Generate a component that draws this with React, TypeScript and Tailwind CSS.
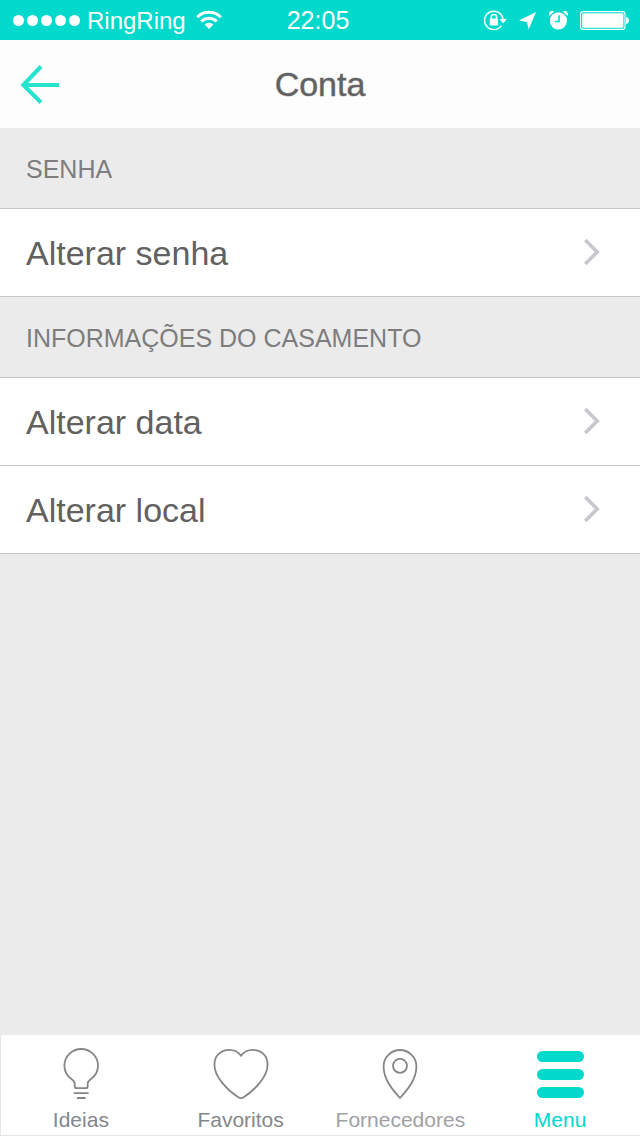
import type { ReactNode } from "react";

interface Section {
  title: string;
  items: string[];
}

interface Tab {
  label: string;
  icon: ReactNode;
  className: string;
  active?: boolean;
}

const sections: Section[] = [
  { title: "Senha", items: ["Alterar senha"] },
  { title: "Informações do casamento", items: ["Alterar data", "Alterar local"] },
];

const tabs: Tab[] = [
  { label: "Ideias", icon: <BulbIcon />, className: "text-[#85868a]" },
  { label: "Favoritos", icon: <HeartIcon />, className: "text-[#85868a]" },
  { label: "Fornecedores", icon: <PinIcon />, className: "text-[#a0a1a4]" },
  { label: "Menu", icon: <MenuIcon />, className: "text-[#00d9cb]", active: true },
];

export default function App() {
  return (
    <div className="flex min-h-screen flex-col bg-[#ebebeb] font-['Liberation_Sans',Arial,sans-serif]">
      <StatusBar />

      <header className="grid h-[88px] grid-cols-[1fr_auto_1fr] items-center bg-[#fdfdfd] px-5">
        <button aria-label="Voltar" className="justify-self-start">
          <BackIcon />
        </button>
        {/* thin translucent stroke stands in for a medium weight */}
        <h1 className="text-[34px] leading-10 text-[#616161] [-webkit-text-stroke:1px_#61616170]">Conta</h1>
      </header>

      <main className="flex-1">
        {sections.map((s) => (
          <section key={s.title}>
            <h2 className="flex h-20 items-center px-[26px] pt-1 text-[25px] text-[#7d7d7d] uppercase">{s.title}</h2>
            <ul className="border-t border-[#c8c7cc]">
              {s.items.map((item) => (
                <li key={item} className="border-b border-[#c8c7cc]">
                  <button className="flex h-[87px] w-full items-center justify-between bg-white pt-0.5 pr-10 pl-[26px] text-left text-[34px] text-[#616161]">
                    {item}
                    <ChevronIcon />
                  </button>
                </li>
              ))}
            </ul>
          </section>
        ))}
      </main>

      <nav className="grid grid-cols-4 border-b border-l border-[#e6e6e6] bg-white pt-[13px] pb-px">
        {tabs.map((t) => (
          <button
            key={t.label}
            aria-current={t.active ? "page" : undefined}
            className={`flex flex-col items-center gap-[6px] text-[21px] leading-7 ${t.className}`}
          >
            {t.icon}
            {t.label}
          </button>
        ))}
      </nav>
    </div>
  );
}

function StatusBar() {
  return (
    <div className="grid h-10 grid-cols-[1fr_auto_1fr] items-center bg-[#00d9cb] text-2xl text-white">
      <div className="flex items-center pl-[13px]">
        <div className="mr-[7px] flex gap-[3px]">
          {[1, 2, 3, 4, 5].map((n) => (
            <span key={n} className="h-[11px] w-[11px] rounded-full bg-white" />
          ))}
        </div>
        <span className="pt-0.5">RingRing</span>
        <WifiIcon />
      </div>
      <time className="pt-0.5 pr-1 text-[25px]">22:05</time>
      <div className="flex items-center justify-end pr-[11px]">
        <RotationLockIcon />
        <LocationIcon />
        <AlarmIcon />
        <BatteryIcon />
      </div>
    </div>
  );
}

function WifiIcon() {
  return (
    <svg width="26" height="20" viewBox="0 0 26 20" className="ml-[10px]" fill="none" stroke="currentColor" strokeWidth="3">
      <path d="M1.2 7.2a16.7 16.7 0 0 1 23.6 0" />
      <path d="M5.3 11.5a10.8 10.8 0 0 1 15.4 0" />
      <path d="M8.6 14.6a6.2 6.2 0 0 1 8.8 0L13 19z" fill="currentColor" stroke="none" />
    </svg>
  );
}

function RotationLockIcon() {
  return (
    <svg width="24" height="22" viewBox="0 0 24 22" className="mr-[11px]" fill="none" stroke="currentColor">
      <path d="M17.4 16.6A9.2 9.2 0 1 1 19 11" strokeWidth="1.5" />
      <path d="M15.6 10h7.2L19.2 14.4z" fill="currentColor" stroke="none" />
      <path d="M7.2 10V8.2a2.7 2.7 0 0 1 5.4 0V10" strokeWidth="1.5" />
      <rect x="5.800" y="9.6" width="8.2" height="6.8" rx="0.6" fill="currentColor" stroke="none" />
    </svg>
  );
}

function LocationIcon() {
  return (
    <svg width="18" height="20" viewBox="0 0 18 20" className="mr-3" fill="currentColor">
      <path d="M17 2 9.6 19.6 8 12 0 10.4z" />
    </svg>
  );
}

function AlarmIcon() {
  return (
    <svg width="20" height="20" viewBox="0 0 20 20" className="mr-[11px]" fill="currentColor">
      <circle cx="9.4" cy="10.8" r="8.600" />
      <path d="M.2 6A3.4 3.4 0 0 1 5.2 1.6z" />
      <path d="M18.6 6a3.4 3.4 0 0 0-5-4.4z" />
      <path d="M10 5.2v6.3H5.8" fill="none" stroke="#00d9cb" strokeWidth="1.6" />
    </svg>
  );
}

function BatteryIcon() {
  return (
    <svg width="49" height="20" viewBox="0 0 49 20" fill="currentColor">
      <rect x="0.6" y="1.6" width="44.4" height="17.8" rx="2.4" fill="none" stroke="currentColor" strokeWidth="1.1" />
      <rect x="2.2" y="3.2" width="41.2" height="14.6" rx="1" />
      <path d="M46 7c4 .6 4 6.400 0 7z" />
    </svg>
  );
}

function BackIcon() {
  return (
    <svg width="40" height="40" viewBox="0 0 40 40" fill="none" stroke="#25e2cd" strokeWidth="4">
      <path d="M21 2.5 3.3 21 21 38.5M3 21h36" />
    </svg>
  );
}

function ChevronIcon() {
  return (
    <svg width="16" height="32" viewBox="0 0 16 32" fill="none" stroke="#c7c7cc" strokeWidth="3.6">
      <path d="m1.2 2 12 12-12 12" />
    </svg>
  );
}

function BulbIcon() {
  return (
    <svg width="52" height="52" viewBox="0 0 52 52" fill="none" stroke="#85868a" strokeWidth="1.8" strokeLinecap="round">
      <path d="M21.7 40.2q-2 0-2-2v-2.4c0-2.2-1.2-3.4-3-4.6C12.2 28 9.4 23.4 9.4 17.8a16.8 16.8 0 0 1 33.6 0c0 5.6-2.8 10.2-7.3 13.4-1.8 1.2-3 2.4-3 4.6v2.4q0 2-2 2z" />
      <path d="M19.5 45.2h13.4M22.6 50h7.4" />
    </svg>
  );
}

function HeartIcon() {
  return (
    <svg width="56" height="52" viewBox="0 0 56 52" fill="none" stroke="#85868a" strokeWidth="1.8">
      <path d="M28 7.6C25 3.6 20.8 1.8 16.2 1.8 7.8 1.8 1.4 8 1.4 16.4 1.4 28.6 14 42 25.4 49.2q2.6 1.8 5.2 0C42 42 54.6 28.6 54.6 16.4 54.6 8 48.2 1.8 39.8 1.8 35.2 1.8 31 3.6 28 7.6z" />
    </svg>
  );
}

function PinIcon() {
  return (
    <svg width="52" height="52" viewBox="0 0 52 52" fill="none" stroke="#85868a" strokeWidth="1.8">
      <path d="M26 50C19 42.4 9.6 31.6 9.6 18.4a16.4 16.4 0 0 1 32.8 0C42.4 31.6 33 42.4 26 50z" />
      <circle cx="26" cy="17.8" r="7" />
    </svg>
  );
}

function MenuIcon() {
  return (
    <svg width="52" height="52" viewBox="0 0 52 52" fill="currentColor">
      <rect x="3" y="3" width="47" height="11" rx="5.5" />
      <rect x="3" y="21" width="47" height="11" rx="5.5" />
      <rect x="3" y="39" width="47" height="11" rx="5.5" />
    </svg>
  );
}
